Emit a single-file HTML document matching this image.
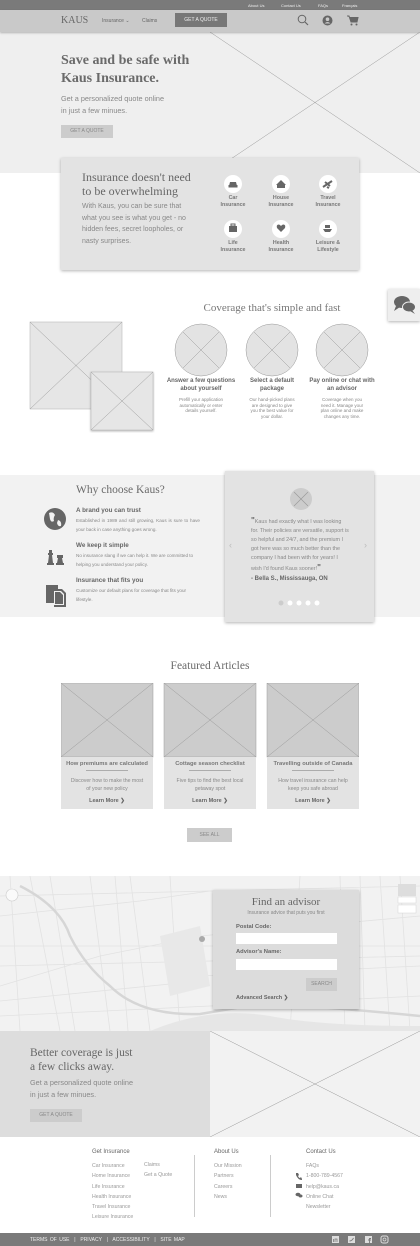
<!DOCTYPE html>
<html><head><meta charset="utf-8"><style>
*{margin:0;padding:0;box-sizing:border-box}
body{width:420px;height:1246px;position:relative;background:#fff;font-family:"Liberation Sans",sans-serif;color:#666;overflow:hidden}
.a{position:absolute}
.sf{font-family:"Liberation Serif",serif;color:#666}
.t{white-space:nowrap}
.btn{position:absolute;background:#ccc;color:#888;font-size:5px;text-align:center}
</style></head><body>
<!-- top bar -->
<div class="a" style="left:0;top:0;width:420px;height:10px;background:#7a7a7a"></div>
<div class="a t" style="top:3px;left:248px;font-size:4px;color:#eee">About Us</div>
<div class="a t" style="top:3px;left:281px;font-size:4px;color:#eee">Contact Us</div>
<div class="a t" style="top:3px;left:318px;font-size:4px;color:#eee">FAQs</div>
<div class="a t" style="top:3px;left:342px;font-size:4px;color:#eee">Français</div>
<!-- hero -->
<div class="a" style="left:0;top:32px;width:420px;height:141px;background:#efefef"></div>
<svg class="a" style="left:210px;top:32px" width="210" height="141"><line x1="0" y1="0" x2="210" y2="141" stroke="#999" stroke-width=".5"/><line x1="210" y1="0" x2="0" y2="141" stroke="#999" stroke-width=".5"/></svg>
<!-- nav -->
<div class="a" style="left:0;top:10px;width:420px;height:22px;background:#c9c9c9;box-shadow:0 1px 2px rgba(0,0,0,.25)"></div>
<div class="a sf t" style="left:61px;top:15px;font-size:10px">KAUS</div>
<div class="a t" style="left:102px;top:18px;font-size:5px">Insurance ⌄</div>
<div class="a t" style="left:142px;top:18px;font-size:5px">Claims</div>
<div class="a" style="left:175px;top:13px;width:52px;height:14px;background:#777;color:#eee;font-size:5px;text-align:center;line-height:14px">GET A QUOTE</div>
<svg class="a" style="left:297px;top:14px" width="12" height="12"><circle cx="5" cy="5" r="3.8" fill="none" stroke="#666" stroke-width="1"/><line x1="8" y1="8" x2="11" y2="11" stroke="#666" stroke-width="1.2"/></svg>
<svg class="a" style="left:322px;top:15px" width="11" height="11"><circle cx="5.5" cy="5.5" r="5" fill="#666"/><circle cx="5.5" cy="4.2" r="1.8" fill="#c9c9c9"/><path d="M2.5 8.5 Q5.5 5.5 8.5 8.5" fill="#c9c9c9"/></svg>
<svg class="a" style="left:347px;top:15px" width="12" height="11"><path d="M0 1 H2 L4 7 H10 L11 2.5 H3" fill="#666" stroke="#666"/><circle cx="4.5" cy="9.5" r="1" fill="#666"/><circle cx="9.5" cy="9.5" r="1" fill="#666"/></svg>
<div class="a sf" style="left:61px;top:52px;font-size:14px;line-height:18px;font-weight:bold;color:#6a6a6a">Save and be safe with<br>Kaus Insurance.</div>
<div class="a" style="left:61px;top:93px;font-size:7.3px;line-height:11.5px;color:#888">Get a personalized quote online<br>in just a few minues.</div>
<div class="btn" style="left:61px;top:125px;width:52px;height:13px;line-height:13px">GET A QUOTE</div>
<!-- card -->
<div class="a" style="left:61px;top:158px;width:298px;height:112px;background:#e3e3e3;box-shadow:0 1px 3px rgba(0,0,0,.3)"></div>
<div class="a sf" style="left:82px;top:170px;font-size:12px;line-height:14px;color:#666">Insurance doesn't need<br>to be overwhelming</div>
<div class="a" style="left:82px;top:201px;font-size:7px;line-height:11.7px;color:#888">With Kaus, you can be sure that<br>what you see is what you get - no<br>hidden fees, secret loopholes, or<br>nasty surprises.</div>
<div class="a" style="left:224px;top:175px;width:18px;height:18px;border-radius:50%;background:#fff"></div>
<div class="a" style="left:272px;top:175px;width:18px;height:18px;border-radius:50%;background:#fff"></div>
<div class="a" style="left:319px;top:175px;width:18px;height:18px;border-radius:50%;background:#fff"></div>
<div class="a" style="left:224px;top:220px;width:18px;height:18px;border-radius:50%;background:#fff"></div>
<div class="a" style="left:272px;top:220px;width:18px;height:18px;border-radius:50%;background:#fff"></div>
<div class="a" style="left:319px;top:220px;width:18px;height:18px;border-radius:50%;background:#fff"></div>
<svg class="a" style="left:224px;top:175px" width="113" height="63">
<path d="M5 11 L6 7 H12 L13 11 Z M4.5 10 H13.5 V12.5 H4.5Z" fill="#666"/>
<path d="M52 10 L57 5 L62 10 H61 V13 H53 V10Z" fill="#666"/>
<path d="M99 12 L108 6 M101 7 L106 11 M103 12 L105 13" stroke="#666" stroke-width="2"/>
<rect x="5" y="51" width="8" height="6" fill="#666"/><rect x="7" y="49" width="4" height="2" fill="none" stroke="#666"/>
<path d="M57 57 L53 53 Q52 50 54.5 49.5 Q56 49.5 57 51 Q58 49.5 59.5 49.5 Q62 50 61 53Z" fill="#666"/>
<path d="M99 54 H108 L106 57 H101Z M101 53 V50 H106 V53" fill="#666"/>
</svg>
<div class="a" style="left:213px;top:195px;width:40px;text-align:center;font-size:5.3px;line-height:7px;font-weight:bold;color:#777">Car<br>Insurance</div>
<div class="a" style="left:261px;top:195px;width:40px;text-align:center;font-size:5.3px;line-height:7px;font-weight:bold;color:#777">House<br>Insurance</div>
<div class="a" style="left:308px;top:195px;width:40px;text-align:center;font-size:5.3px;line-height:7px;font-weight:bold;color:#777">Travel<br>Insurance</div>
<div class="a" style="left:213px;top:240px;width:40px;text-align:center;font-size:5.3px;line-height:7px;font-weight:bold;color:#777">Life<br>Insurance</div>
<div class="a" style="left:261px;top:240px;width:40px;text-align:center;font-size:5.3px;line-height:7px;font-weight:bold;color:#777">Health<br>Insurance</div>
<div class="a" style="left:308px;top:240px;width:40px;text-align:center;font-size:5.3px;line-height:7px;font-weight:bold;color:#777">Leisure &amp;<br>Lifestyle</div>
<!-- chat -->
<div class="a" style="left:388px;top:289px;width:32px;height:32px;background:#eee;box-shadow:0 1px 3px rgba(0,0,0,.3)"></div>
<svg class="a" style="left:393px;top:295px" width="24" height="20"><ellipse cx="9" cy="7" rx="8" ry="6" fill="#666"/><path d="M3 11 L1 16 L7 12Z" fill="#666"/><ellipse cx="16" cy="12" rx="6.5" ry="5" fill="#666" stroke="#eee" stroke-width="1"/><path d="M19 15 L22 19 L17 16Z" fill="#666"/></svg>
<!-- coverage -->
<div class="a sf t" style="left:172px;top:302px;width:200px;text-align:center;font-size:11px;color:#777">Coverage that's simple and fast</div>
<svg class="a" style="left:29px;top:321px" width="126" height="112">
<rect x="1" y="1" width="92" height="87" fill="#e6e6e6" stroke="#bbb" stroke-width=".6"/><line x1="1" y1="1" x2="93" y2="88" stroke="#999" stroke-width=".5"/><line x1="93" y1="1" x2="1" y2="88" stroke="#999" stroke-width=".5"/>
<rect x="62" y="51" width="62" height="58" fill="#e6e6e6" stroke="#bbb" stroke-width=".6" style="filter:drop-shadow(0 1px 1px rgba(0,0,0,.3))"/><line x1="62" y1="51" x2="124" y2="109" stroke="#999" stroke-width=".5"/><line x1="124" y1="51" x2="62" y2="109" stroke="#999" stroke-width=".5"/>
</svg>
<svg class="a" style="left:170px;top:320px" width="200" height="62">
<g stroke="#999" stroke-width=".5"><circle cx="31" cy="30" r="26" fill="#e3e3e3"/><line x1="13" y1="12" x2="49" y2="48"/><line x1="49" y1="12" x2="13" y2="48"/>
<circle cx="102" cy="30" r="26" fill="#e3e3e3"/><line x1="84" y1="12" x2="120" y2="48"/><line x1="120" y1="12" x2="84" y2="48"/>
<circle cx="172" cy="30" r="26" fill="#e3e3e3"/><line x1="154" y1="12" x2="190" y2="48"/><line x1="190" y1="12" x2="154" y2="48"/></g></svg>
<div class="a" style="left:161px;top:378px;width:80px;text-align:center;font-size:6px;line-height:7.5px;font-weight:bold;color:#666">Answer a few questions<br>about yourself</div>
<div class="a" style="left:232px;top:378px;width:80px;text-align:center;font-size:6px;line-height:7.5px;font-weight:bold;color:#666">Select a default<br>package</div>
<div class="a" style="left:302px;top:378px;width:80px;text-align:center;font-size:6px;line-height:7.5px;font-weight:bold;color:#666">Pay online or chat with<br>an advisor</div>
<div class="a" style="left:161px;top:397px;width:80px;text-align:center;font-size:4.5px;line-height:5.7px;color:#888">Prefill your application<br>automatically or enter<br>details yourself.</div>
<div class="a" style="left:232px;top:397px;width:80px;text-align:center;font-size:4.5px;line-height:5.7px;color:#888">Our hand-picked plans<br>are designed to give<br>you the best value for<br>your dollar.</div>
<div class="a" style="left:302px;top:397px;width:80px;text-align:center;font-size:4.5px;line-height:5.7px;color:#888">Coverage when you<br>need it. Manage your<br>plan online and make<br>changes any time.</div>
<!-- why -->
<div class="a" style="left:0;top:475px;width:420px;height:142px;background:#f2f2f2"></div>
<div class="a sf t" style="left:76px;top:484px;font-size:11.5px;color:#6a6a6a">Why choose Kaus?</div>
<svg class="a" style="left:44px;top:508px" width="24" height="100">
<circle cx="11" cy="11" r="11" fill="#666"/><path d="M5 5 Q9 3 11 7 Q9 10 10 13 Q7 15 6 11 Z M14 12 Q18 13 17 18 Q14 19 13 15Z" fill="#f2f2f2"/>
<path d="M3 57 H10 V55 H9 L8 47 H9 V45 H8 V42 H5 V45 H4 V47 H5 L4 55 H3Z" fill="#666"/><path d="M12 57 H20 V55 H19 L18 50 H19 V47 H13 V50 H14 L13 55 H12Z" fill="#666"/>
<path d="M2 77 H14 V81 H18 L22 85 V99 H10 V95 H2Z" fill="#666"/><path d="M10 83 H17 L20 86 V97 H10Z" fill="#f2f2f2"/><path d="M11 84 H16 L19 87 V96 H11Z" fill="#666"/>
</svg>
<div class="a t" style="left:76px;top:507px;font-size:6.3px;font-weight:bold;color:#666">A brand you can trust</div>
<div class="a" style="left:76px;top:516px;width:124px;font-size:4.6px;line-height:9px;color:#888;text-align:justify">Established in 1989 and still growing, Kaus is sure to have your back in case anything goes wrong.</div>
<div class="a t" style="left:76px;top:542px;font-size:6.3px;font-weight:bold;color:#666">We keep it simple</div>
<div class="a" style="left:76px;top:551px;width:124px;font-size:4.6px;line-height:9px;color:#888">No insurance slang if we can help it. We are committed to helping you understand your policy.</div>
<div class="a t" style="left:76px;top:577px;font-size:6.3px;font-weight:bold;color:#666">Insurance that fits you</div>
<div class="a" style="left:76px;top:586px;width:124px;font-size:4.6px;line-height:9px;color:#888">Customize our default plans for coverage that fits your lifestyle.</div>
<!-- testimonial -->
<div class="a" style="left:225px;top:471px;width:149px;height:151px;background:#e3e3e3;box-shadow:0 1px 3px rgba(0,0,0,.3)"></div>
<svg class="a" style="left:289px;top:487px" width="24" height="24"><circle cx="12" cy="12" r="11" fill="#ccc"/><g stroke="#999" stroke-width=".6"><line x1="5" y1="5" x2="19" y2="19"/><line x1="19" y1="5" x2="5" y2="19"/></g></svg>
<div class="a" style="left:251px;top:516px;width:112px;font-size:5.4px;line-height:9px;color:#888"><b style="font-size:8px;color:#666">"</b>Kaus had exactly what I was looking<br>for. Their policies are versatile, support is<br>so helpful and 24/7, and the premium I<br>got here was so much better than the<br>company I had been with for years! I<br>wish I'd found Kaus sooner!<b style="font-size:8px;color:#666">"</b></div>
<div class="a t" style="left:251px;top:576px;font-size:6px;font-weight:bold;color:#666">- Bella S., Mississauga, ON</div>
<div class="a t" style="left:229px;top:540px;font-size:9px;color:#bbb">‹</div>
<div class="a t" style="left:364px;top:540px;font-size:9px;color:#bbb">›</div>
<svg class="a" style="left:276px;top:599px" width="48" height="8"><circle cx="5" cy="4" r="2.5" fill="#ccc"/><circle cx="14" cy="4" r="2.5" fill="#fff"/><circle cx="23" cy="4" r="2.5" fill="#fff"/><circle cx="32" cy="4" r="2.5" fill="#fff"/><circle cx="41" cy="4" r="2.5" fill="#fff"/></svg>
<!-- articles -->
<div class="a sf t" style="left:110px;top:660px;width:200px;text-align:center;font-size:11.5px;color:#6a6a6a">Featured Articles</div>
<svg class="a" style="left:61px;top:683px" width="298" height="127">
<g stroke="#999" stroke-width=".5">
<rect x="0" y="0" width="92" height="74" fill="#ccc"/><line x1="0" y1="0" x2="92" y2="74"/><line x1="92" y1="0" x2="0" y2="74"/>
<rect x="103" y="0" width="92" height="74" fill="#ccc"/><line x1="103" y1="0" x2="195" y2="74"/><line x1="195" y1="0" x2="103" y2="74"/>
<rect x="206" y="0" width="92" height="74" fill="#ccc"/><line x1="206" y1="0" x2="298" y2="74"/><line x1="298" y1="0" x2="206" y2="74"/></g>
<rect x="0" y="74" width="92" height="52" fill="#e3e3e3"/><rect x="103" y="74" width="92" height="52" fill="#e3e3e3"/><rect x="206" y="74" width="92" height="52" fill="#e3e3e3"/>
<g stroke="#777" stroke-width=".6"><line x1="25" y1="87.5" x2="67" y2="87.5"/><line x1="128" y1="87.5" x2="170" y2="87.5"/><line x1="231" y1="87.5" x2="273" y2="87.5"/></g>
</svg>
<div class="a t" style="left:61px;top:761px;width:92px;text-align:center;font-size:5.8px;font-weight:bold;color:#777">How premiums are calculated</div>
<div class="a t" style="left:164px;top:761px;width:92px;text-align:center;font-size:5.8px;font-weight:bold;color:#777">Cottage season checklist</div>
<div class="a t" style="left:267px;top:761px;width:92px;text-align:center;font-size:5.8px;font-weight:bold;color:#777">Travelling outside of Canada</div>
<div class="a" style="left:61px;top:778px;width:92px;text-align:center;font-size:5.2px;line-height:7.7px;color:#888">Discover how to make the most<br>of your new policy</div>
<div class="a" style="left:164px;top:778px;width:92px;text-align:center;font-size:5.2px;line-height:7.7px;color:#888">Five tips to find the best local<br>getaway spot</div>
<div class="a" style="left:267px;top:778px;width:92px;text-align:center;font-size:5.2px;line-height:7.7px;color:#888">How travel insurance can help<br>keep you safe abroad</div>
<div class="a t" style="left:61px;top:798px;width:92px;text-align:center;font-size:5.5px;font-weight:bold;color:#666">Learn More ❯</div>
<div class="a t" style="left:164px;top:798px;width:92px;text-align:center;font-size:5.5px;font-weight:bold;color:#666">Learn More ❯</div>
<div class="a t" style="left:267px;top:798px;width:92px;text-align:center;font-size:5.5px;font-weight:bold;color:#666">Learn More ❯</div>
<div class="btn" style="left:187px;top:828px;width:45px;height:14px;line-height:14px">SEE ALL</div>
<!-- map -->
<div class="a" style="left:0;top:876px;width:420px;height:155px;background:#f2f2f2"></div>
<svg class="a" style="left:0;top:876px" width="420" height="155">
<g stroke="#e2e2e2" stroke-width=".8" fill="none">
<path d="M0 40 L140 25 L210 15 M0 110 L100 80 L200 60 L420 40 M30 0 L60 155 M90 0 L110 155 M130 0 L150 155 M170 0 L180 155 M300 0 L290 155 M340 0 L345 155 M380 0 L390 155 M0 140 L420 120 M200 100 L420 90 M0 70 L420 70 M10 0 L20 155 M50 0 L75 155 M115 0 L128 155 M360 0 L365 155 M400 0 L410 155 M0 20 L420 10 M0 90 L420 80 M0 125 L200 105"/>
</g>
<path d="M20 10 Q60 30 70 60 Q85 90 110 110 Q140 140 200 138 L260 128 Q320 130 420 140" stroke="#d6d6d6" stroke-width="2.5" fill="none"/>
<path d="M160 60 L200 50 L210 110 L170 120Z" fill="#e8e8e8"/>
<path d="M150 155 Q210 130 270 140 Q320 150 420 150 V155Z" fill="#e6e6e6"/>
<circle cx="12" cy="19" r="6" fill="#fafafa" stroke="#ccc" stroke-width=".6"/>
<rect x="398" y="8" width="18" height="12" fill="#ddd"/><rect x="398" y="21" width="18" height="6" fill="#fff" stroke="#ccc" stroke-width=".4"/><rect x="398" y="29" width="18" height="8" fill="#fff" stroke="#ccc" stroke-width=".4"/>
<circle cx="202" cy="63" r="3" fill="#aaa"/>
</svg>
<div class="a" style="left:213px;top:890px;width:146px;height:119px;background:#dcdcdc;box-shadow:0 1px 3px rgba(0,0,0,.3)"></div>
<div class="a sf t" style="left:213px;top:896px;width:146px;text-align:center;font-size:11px;color:#666">Find an advisor</div>
<div class="a t" style="left:213px;top:910px;width:146px;text-align:center;font-size:5px;color:#888">Insurance advice that puts you first</div>
<div class="a t" style="left:236px;top:924px;font-size:5.8px;font-weight:bold;color:#666">Postal Code:</div>
<div class="a" style="left:236px;top:933px;width:101px;height:11px;background:#fff"></div>
<div class="a t" style="left:236px;top:949px;font-size:5.8px;font-weight:bold;color:#666">Advisor's Name:</div>
<div class="a" style="left:236px;top:959px;width:101px;height:11px;background:#fff"></div>
<div class="btn" style="left:306px;top:978px;width:31px;height:13px;line-height:13px">SEARCH</div>
<div class="a t" style="left:236px;top:995px;font-size:5.5px;font-weight:bold;color:#666">Advanced Search ❯</div>
<!-- better -->
<div class="a" style="left:0;top:1031px;width:210px;height:106px;background:#ddd"></div>
<div class="a" style="left:210px;top:1031px;width:210px;height:106px;background:#f2f2f2"></div>
<svg class="a" style="left:210px;top:1031px" width="210" height="106"><g stroke="#999" stroke-width=".5"><line x1="0" y1="0" x2="210" y2="106"/><line x1="210" y1="0" x2="0" y2="106"/></g></svg>
<div class="a sf" style="left:30px;top:1046px;font-size:11.5px;line-height:14px;color:#666">Better coverage is just<br>a few clicks away.</div>
<div class="a" style="left:30px;top:1077px;font-size:7.3px;line-height:11.7px;color:#888">Get a personalized quote online<br>in just a few minues.</div>
<div class="btn" style="left:30px;top:1109px;width:52px;height:13px;line-height:13px">GET A QUOTE</div>
<!-- footer -->
<div class="a t" style="left:92px;top:1149px;font-size:6px;color:#666">Get Insurance</div>
<div class="a" style="left:92px;top:1161px;font-size:5.2px;line-height:10.3px;color:#999">Car Insurance<br>Home Insurance<br>Life Insurance<br>Health Insurance<br>Travel Insurance<br>Leisure Insurance</div>
<div class="a" style="left:144px;top:1160px;font-size:5.2px;line-height:10.3px;color:#999">Claims<br>Get a Quote</div>
<div class="a" style="left:194px;top:1155px;width:1px;height:62px;background:#ccc"></div>
<div class="a t" style="left:214px;top:1149px;font-size:6px;color:#666">About Us</div>
<div class="a" style="left:214px;top:1161px;font-size:5.2px;line-height:10.3px;color:#999">Our Mission<br>Partners<br>Careers<br>News</div>
<div class="a" style="left:270px;top:1155px;width:1px;height:62px;background:#ccc"></div>
<div class="a t" style="left:306px;top:1149px;font-size:6px;color:#666">Contact Us</div>
<div class="a" style="left:306px;top:1161px;font-size:5.2px;line-height:10.3px;color:#999">FAQs<br>1-800-789-4567<br>help@kaus.ca<br>Online Chat<br>Newsletter</div>
<svg class="a" style="left:295px;top:1172px" width="8" height="32"><path d="M1 1 L3 1 L4 3 L3 4 Q4 6 5 6 L6 5 L7 7 L7 8 Q3 8 1 3Z" fill="#666"/><rect x="1" y="12" width="6" height="4" fill="#666"/><ellipse cx="3" cy="22.5" rx="2.5" ry="1.8" fill="#666"/><ellipse cx="5.5" cy="24" rx="2" ry="1.5" fill="#666"/></svg>
<div class="a" style="left:0;top:1233px;width:420px;height:13px;background:#7a7a7a"></div>
<div class="a t" style="left:30px;top:1237px;font-size:5px;color:#eee;word-spacing:1px">TERMS OF USE &nbsp;|&nbsp; PRIVACY &nbsp;|&nbsp; ACCESSIBILITY &nbsp;|&nbsp; SITE MAP</div>
<svg class="a" style="left:331px;top:1235px" width="60" height="9">
<rect x="1" y="1" width="7" height="7" fill="#ddd"/><rect x="17" y="1" width="7" height="7" fill="#ddd"/><rect x="34" y="1" width="7" height="7" fill="#ddd"/><rect x="50" y="1" width="7" height="7" rx="2" fill="none" stroke="#ddd"/><circle cx="53.5" cy="4.5" r="1.5" fill="none" stroke="#ddd" stroke-width=".7"/>
<path d="M2.5 4 V7 M4 7 V4 H6 V7" stroke="#7a7a7a" stroke-width=".8" fill="none"/><path d="M18.5 6 Q21 6 22.5 3" stroke="#7a7a7a" stroke-width=".9" fill="none"/><path d="M38.5 8 V3.5 H40 M37 5 H40" stroke="#7a7a7a" stroke-width=".9" fill="none"/>
</svg>
</body></html>
